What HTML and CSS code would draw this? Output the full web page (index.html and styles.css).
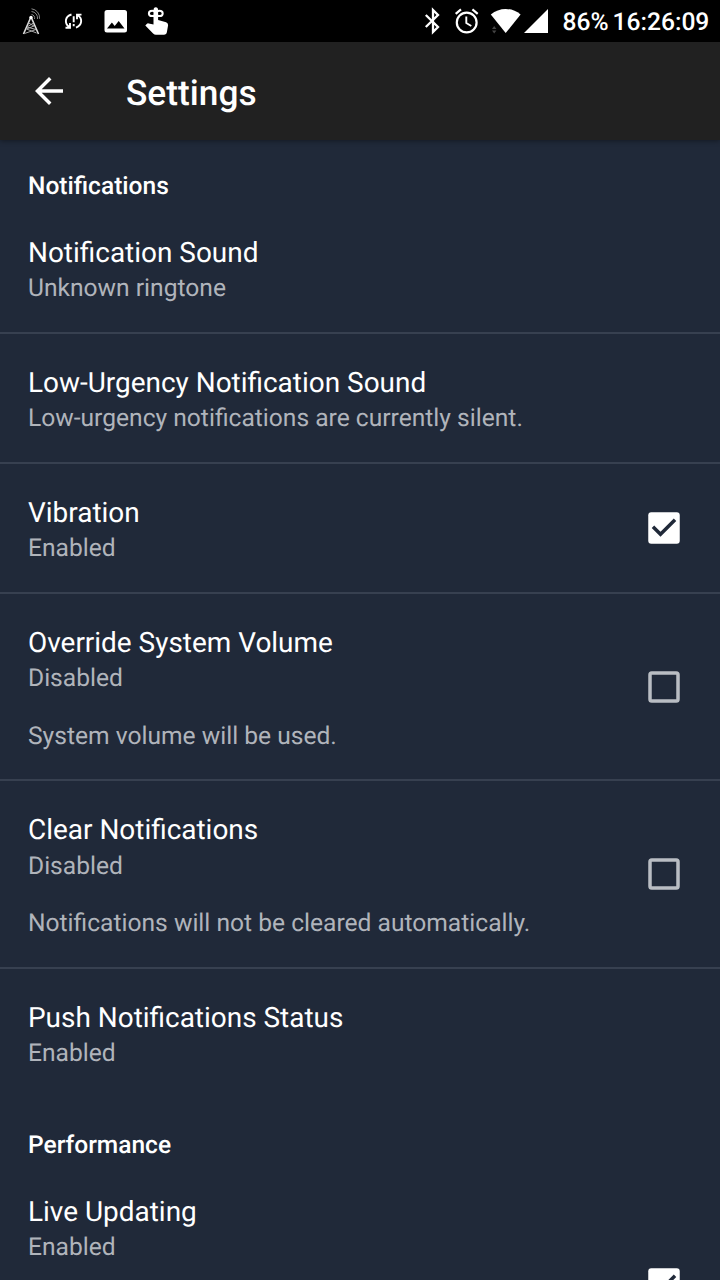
FILE: index.html
```html
<!DOCTYPE html>
<html lang="en">
<head>
    <meta charset="UTF-8">
    <meta name="viewport" content="width=device-width, initial-scale=1.0">
    <title>Settings</title>
    <link rel="stylesheet" href="styles.css">
</head>
<body>

    <div class="status-bar">
        <svg class="status-left" width="160" height="42" viewBox="10 0 160 42">
            <!-- radio tower -->
            <g fill="none" stroke="#ddd" stroke-width="1">
                <path d="M23.500 34 30.500 18h1L38.500 34" stroke-width="1.600"/>
                <path d="M28.500 23l5.500 3-7.500 3 10 4M33.500 23l-6.500 4 9 2.500-11.500 4" stroke="#aaa"/>
                <path d="M31.500 14.500a3.500 3.500 0 0 1 3 4.500M31.500 11.500a6.500 6.500 0 0 1 6 7.500M31.500 8.800a9 9 0 0 1 8 10" stroke="#888"/>
            </g>
            <circle cx="31" cy="17.500" r="1.700" fill="#fff"/>
            <!-- sync problem -->
            <g fill="none" stroke="#fff" stroke-width="1.900">
                <path d="M71.500 14.500C64.500 16.500 64.500 23.500 69 26.800M65.500 27.700h4.500v-4.700"/>
                <path d="M76 27.700C82.500 25 82.500 18.500 78 15.500M81.500 14.600H77v4.700"/>
                <path d="M73.700 16.300v6M73.700 24v2.200"/>
            </g>
            <!-- picture -->
            <path fill="#fff" fill-rule="evenodd" d="M107 10h17.500q2.500 0 2.500 2.500v17.500q0 2.500-2.500 2.500H107q-2.500 0-2.500-2.500V12.500Q104.500 10 107 10zM107 28.500h17.500l-5.800-7.500-4 5-2.800-3.500z"/>
            <!-- hand with ribbon -->
            <path fill="#fff" d="M153.500 10.500q0-3.300 2.300-3.300t2.300 3.300V20l8 2.300q2.200.8 2 3l-1.200 6.700q-.4 2.800-3 2.800h-8q-1.500 0-2.800-1.300l-7.800-8 1.400-1.600q.8-.8 2-.5l4.800 1.200z"/>
            <g fill="none" stroke="#fff" stroke-width="2">
                <ellipse cx="152.200" cy="13.400" rx="3.300" ry="2.700"/>
                <ellipse cx="159.400" cy="13.400" rx="3.300" ry="2.700"/>
            </g>
        </svg>
        <svg class="status-right" width="150" height="42" viewBox="410 0 150 42">
            <!-- bluetooth -->
            <path fill="none" stroke="#fff" stroke-width="2.300" d="M425.800 15l12.200 12-5 5V10l5 5-12.200 12"/>
            <!-- alarm -->
            <g fill="none" stroke="#fff" stroke-width="2.200">
                <circle cx="466.700" cy="22.500" r="9.900"/>
                <path d="M455.700 13.800l5.300-4.400M477.700 13.800l-5.300-4.400"/>
                <path d="M466.300 16.500v6.500l5 3" stroke-width="1.900"/>
            </g>
            <!-- wifi and signal -->
            <path fill="#fff" d="M505.700 33L490.800 14.500Q497.500 9 505.700 9t14.900 5.500z"/>
            <path fill="#444" d="M492 29l2.200-3 2.200 3zM492 30.500h4.400l-2.200 3z"/>
            <path fill="#fff" d="M524 33L548 9v24z"/>
        </svg>
        <span class="battery">86%</span>
        <span class="clock">16:26:09</span>
    </div>

    <div class="toolbar">
        <svg class="back" width="42" height="42" viewBox="0 0 24 24">
            <path fill="#fff" d="M20 11H7.830l5.590-5.590L12 4l-8 8 8 8 1.410-1.410L7.830 13H20v-2z"/>
        </svg>
        <h1>Settings</h1>
    </div>

    <div class="settings">
        <h2>Notifications</h2>
        <div class="item">
            <div class="text">
                <h3>Notification Sound</h3>
                <p>Unknown ringtone</p>
            </div>
        </div>
        <div class="item">
            <div class="text">
                <h3>Low-Urgency Notification Sound</h3>
                <p>Low-urgency notifications are currently silent.</p>
            </div>
        </div>
        <div class="item">
            <div class="text">
                <h3>Vibration</h3>
                <p>Enabled</p>
            </div>
            <svg class="checkbox checked" viewBox="0 0 24 24">
                <rect x="3" y="3" width="18" height="18" rx="1.700"/>
                <path d="M5.700 11.300l4.300 4.300 8.300-8.300"/>
            </svg>
        </div>
        <div class="item">
            <div class="text">
                <h3>Override System Volume</h3>
                <p>Disabled<br><br>System volume will be used.</p>
            </div>
            <svg class="checkbox" viewBox="0 0 24 24">
                <rect x="4" y="4" width="16" height="16" rx="1"/>
            </svg>
        </div>
        <div class="item">
            <div class="text">
                <h3>Clear Notifications</h3>
                <p>Disabled<br><br>Notifications will not be cleared automatically.</p>
            </div>
            <svg class="checkbox" viewBox="0 0 24 24">
                <rect x="4" y="4" width="16" height="16" rx="1"/>
            </svg>
        </div>
        <div class="item last">
            <div class="text">
                <h3>Push Notifications Status</h3>
                <p>Enabled</p>
            </div>
        </div>

        <h2>Performance</h2>
        <div class="item tall">
            <div class="text">
                <h3>Live Updating</h3>
                <p>Enabled</p>
            </div>
            <svg class="checkbox checked" viewBox="0 0 24 24">
                <rect x="3" y="3" width="18" height="18" rx="1.700"/>
                <path d="M5.700 11.300l4.300 4.300 8.300-8.300"/>
            </svg>
        </div>
    </div>

</body>
</html>
```

FILE: styles.css
```css
* {
    box-sizing: border-box;
}
body {
    display: flex;
    flex-direction: column;
    height: 1280px;
    margin: 0;
    overflow: hidden;
    background-color: #202939;
    color: white;
    font-family: Roboto, sans-serif;
    text-rendering: geometricPrecision;
}
h1, h2, h3, p {
    margin: 0;
}
.status-bar {
    display: flex;
    flex: none;
    align-items: center;
    height: 42px;
    padding: 0 10px;
    background-color: black;
    font-size: 24.6px;
    font-weight: 500;
    line-height: 42px;
    white-space: nowrap;
}
.status-right {
    margin-left: auto;
}
.battery {
    width: 50px;
    padding-left: 2.5px;
    padding-top: 4px;
}
.clock {
    width: 100px;
    padding-left: 2.5px;
    padding-top: 4px;
}
.toolbar {
    display: flex;
    flex: none;
    align-items: center;
    height: 98px;
    padding: 0 28px;
    background-color: #212121;
    box-shadow: 0 1px 5px rgba(0, 0, 0, 0.4);
}
.back {
    margin-right: 56px;
}
h1 {
    padding-top: 4px;
    font-size: 35.3px;
    font-weight: 500;
    line-height: 41px;
}
.settings {
    flex: 1;
    overflow: hidden;
}
h2 {
    height: 63.75px;
    padding: 32.2px 28px 0;
    font-size: 24.55px;
    font-weight: 500;
    line-height: 28.75px;
}
.item {
    display: flex;
    align-items: center;
    min-height: 130px;
    padding: 0 35px 0 28px;
    border-bottom: 2px solid #374050;
}
.last {
    border-bottom-color: transparent;
}
.tall {
    height: 244px;
}
.text {
    flex: 1;
    align-self: flex-start;
    padding: 32px 0 27.75px;
}
h3 {
    margin-bottom: 6.5px;
    font-size: 27.95px;
    font-weight: 400;
    line-height: 33px;
}
p {
    color: #b0b4bb;
    font-size: 24.6px;
    line-height: 28.75px;
}
.checkbox {
    width: 42px;
    height: 42px;
    fill: none;
    stroke: #b9bdc3;
    stroke-width: 2;
}
.checked rect {
    fill: white;
    stroke: none;
}
.checked path {
    stroke: #202939;
}
```
